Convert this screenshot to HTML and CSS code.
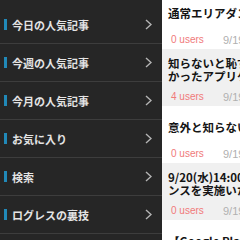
FILE: index.html
```html
<!DOCTYPE html>
<html lang="ja">
<head>
<meta charset="utf-8">
<link rel="stylesheet" href="styles.css">
</head>
<body>
<div class="app">
  <nav class="menu">
    <div class="item"><span class="mark"></span><span class="label">今日の人気記事</span><svg class="chev" viewBox="0 0 7 11"><path d="M1 1 L6 5.5 L1 10" /></svg></div>
    <div class="item"><span class="mark"></span><span class="label">今週の人気記事</span><svg class="chev" viewBox="0 0 7 11"><path d="M1 1 L6 5.5 L1 10" /></svg></div>
    <div class="item"><span class="mark"></span><span class="label">今月の人気記事</span><svg class="chev" viewBox="0 0 7 11"><path d="M1 1 L6 5.5 L1 10" /></svg></div>
    <div class="item"><span class="mark"></span><span class="label">お気に入り</span><svg class="chev" viewBox="0 0 7 11"><path d="M1 1 L6 5.5 L1 10" /></svg></div>
    <div class="item"><span class="mark"></span><span class="label">検索</span><svg class="chev" viewBox="0 0 7 11"><path d="M1 1 L6 5.5 L1 10" /></svg></div>
    <div class="item"><span class="mark"></span><span class="label">ログレスの裏技</span><svg class="chev" viewBox="0 0 7 11"><path d="M1 1 L6 5.5 L1 10" /></svg></div>
  </nav>
  <main class="list">
    <div class="article first">
      <div class="title"><span class="line">通常エリアダンジョン</span></div>
      <div class="meta"><span class="users">0 users</span><span class="date">9/19</span></div>
    </div>
    <div class="article alt">
      <div class="title"><span class="line">知らないと恥ずかしい</span><span class="line">かったアプリケーション</span></div>
      <div class="meta"><span class="users">4 users</span><span class="date">9/19</span></div>
    </div>
    <div class="article">
      <div class="title"><span class="line">意外と知らない</span></div>
      <div class="meta"><span class="users">0 users</span><span class="date">9/19</span></div>
    </div>
    <div class="article alt">
      <div class="title"><span class="line">9/20(水)14:00</span><span class="line">ンスを実施いたします</span></div>
      <div class="meta"><span class="users">0 users</span><span class="date">9/19</span></div>
    </div>
    <div class="article">
      <div class="title"><span class="line">【Google Play】</span></div>
      <div class="meta"><span class="users">0 users</span><span class="date">9/19</span></div>
    </div>
  </main>
</div>
</body>
</html>
```
FILE: styles.css
```css
html, body {
  margin: 0;
  padding: 0;
  width: 240px;
  height: 240px;
  overflow: hidden;
}
.app {
  display: flex;
  width: 240px;
  height: 240px;
  overflow: hidden;
}
.menu {
  width: 162px;
  flex: none;
  background: #262626;
  padding-top: 6px;
  font-family: "Noto Sans CJK JP", sans-serif;
}
.item {
  display: flex;
  align-items: center;
  height: 37px;
  border-bottom: 1px solid #3d3d3d;
  padding-left: 4px;
  padding-right: 10px;
}
.mark {
  width: 3px;
  height: 11px;
  background: #2189b8;
  margin-right: 5px;
  flex: none;
}
.label {
  flex: 1;
  color: #e4e4e4;
  font-size: 11px;
  font-weight: bold;
}
.chev {
  width: 7px;
  height: 11px;
  fill: none;
  stroke: #b4b4b4;
  stroke-width: 1.4;
}
.list {
  flex: 1;
  min-width: 0;
  overflow: hidden;
  background: #fff;
}
.article {
  height: 57px;
  display: flex;
  flex-direction: column;
  white-space: nowrap;
  overflow: hidden;
}
.article.first {
  margin-top: -8px;
}
.article.alt {
  background: #f0f0f0;
}
.title {
  height: 38px;
  padding-left: 6px;
  padding-top: 4px;
  box-sizing: border-box;
  display: flex;
  flex-direction: column;
  justify-content: center;
  font-family: "Noto Sans CJK JP", sans-serif;
  font-weight: bold;
  font-size: 11.5px;
  line-height: 13px;
  color: #151515;
}
.line {
  display: block;
  height: 13px;
}
.meta {
  display: flex;
  padding-left: 9px;
  margin-top: 3px;
  font-family: "Liberation Sans", sans-serif;
  font-size: 10px;
  line-height: 14px;
}
.users {
  color: #f07a7a;
  width: 52px;
  flex: none;
}
.date {
  color: #b0b0b0;
  font-size: 11px;
}
```
